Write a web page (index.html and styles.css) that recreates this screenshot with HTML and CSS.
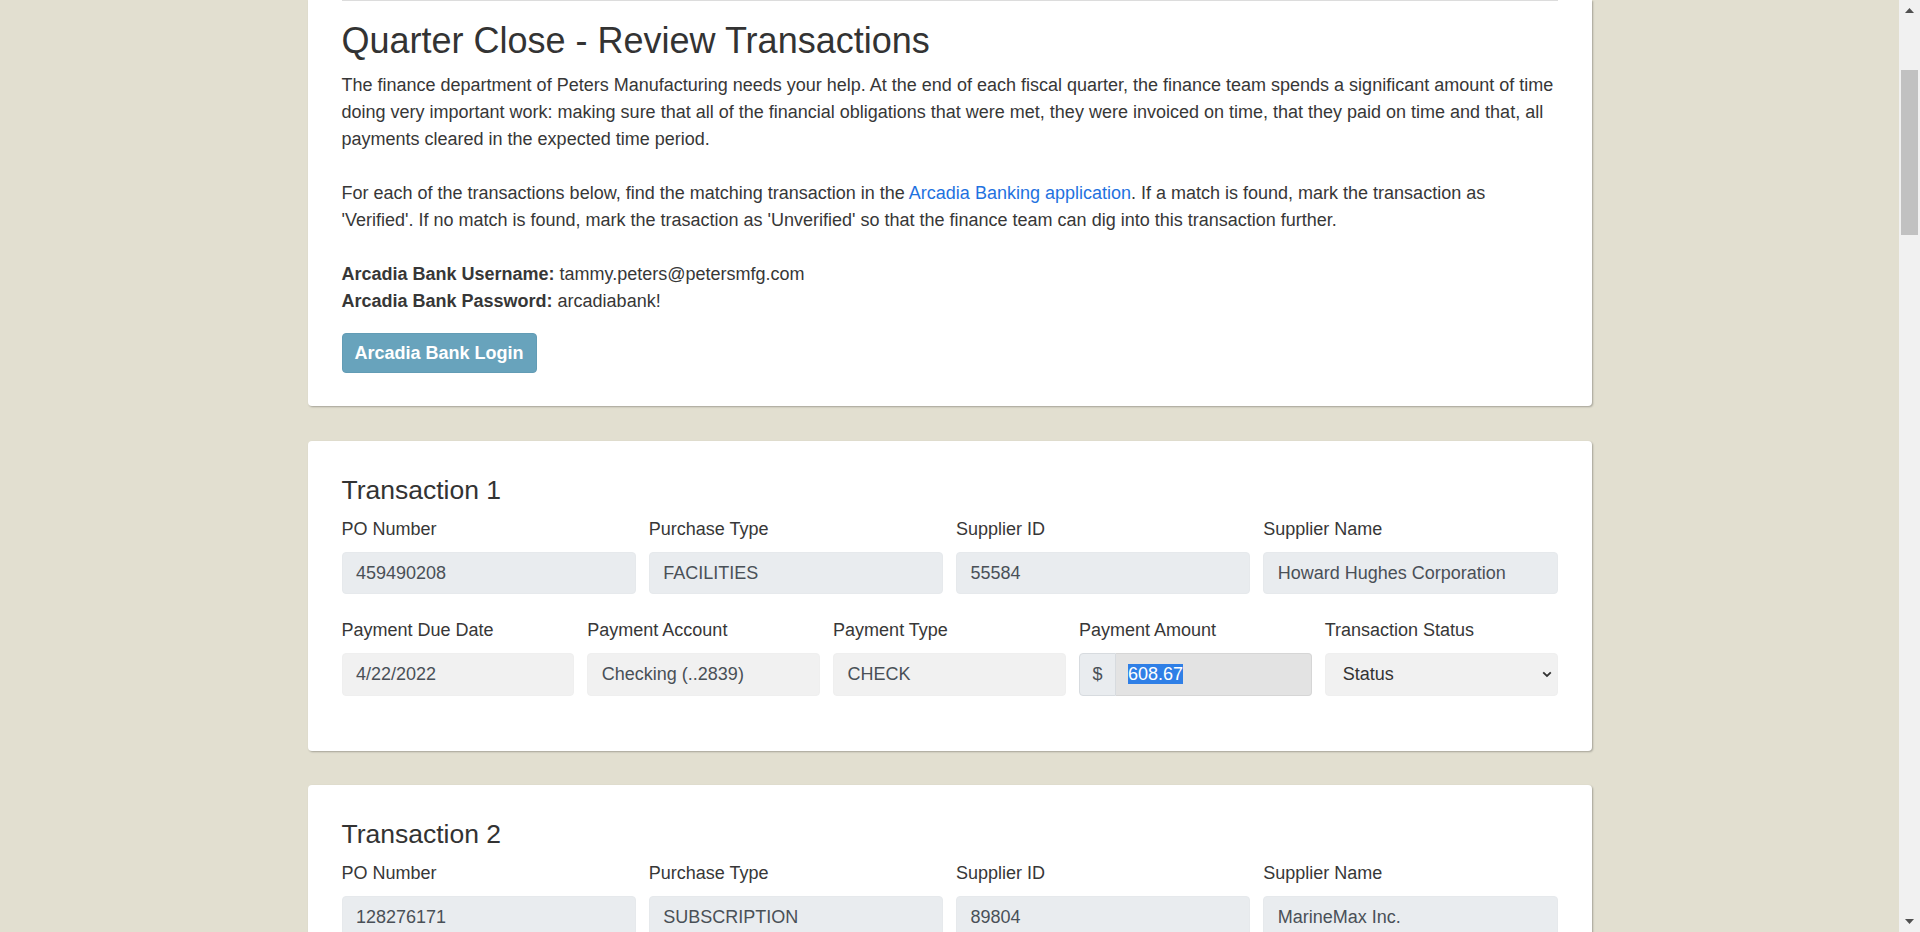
FILE: index.html
```html
<!DOCTYPE html>
<html lang="en">
<head>
<meta charset="utf-8">
<title>Quarter Close - Review Transactions</title>
<link rel="stylesheet" href="styles.css">
</head>
<body>
<div class="page">
  <div class="container">
    <section class="card card-intro">
      <hr class="rule">
      <h2 class="title">Quarter Close - Review Transactions</h2>
      <p class="intro">The finance department of Peters Manufacturing needs your help. At the end of each fiscal quarter, the finance team spends a significant amount of time doing very important work: making sure that all of the financial obligations that were met, they were invoiced on time, that they paid on time and that, all payments cleared in the expected time period.<br><br>For each of the transactions below, find the matching transaction in the <a class="link" href="#">Arcadia Banking application</a>. If a match is found, mark the transaction as 'Verified'. If no match is found, mark the trasaction as 'Unverified' so that the finance team can dig into this transaction further.<br><br><b>Arcadia Bank Username:</b> tammy.peters@petersmfg.com<br><b>Arcadia Bank Password:</b> arcadiabank!</p>
      <button class="btn-login" type="button">Arcadia Bank Login</button>
    </section>

    <section class="card">
      <h4 class="tx-title">Transaction 1</h4>
      <div class="row row-4">
        <div class="field"><label class="label">PO Number</label><div class="control">459490208</div></div>
        <div class="field"><label class="label">Purchase Type</label><div class="control">FACILITIES</div></div>
        <div class="field"><label class="label">Supplier ID</label><div class="control">55584</div></div>
        <div class="field"><label class="label">Supplier Name</label><div class="control">Howard Hughes Corporation</div></div>
      </div>
      <div class="row row-5">
        <div class="field"><label class="label">Payment Due Date</label><div class="control control-light">4/22/2022</div></div>
        <div class="field"><label class="label">Payment Account</label><div class="control control-light">Checking (..2839)</div></div>
        <div class="field"><label class="label">Payment Type</label><div class="control control-light">CHECK</div></div>
        <div class="field"><label class="label">Payment Amount</label>
          <div class="input-group"><span class="addon">$</span><div class="control control-amount"><span class="selected">608.67</span></div></div>
        </div>
        <div class="field"><label class="label">Transaction Status</label>
          <div class="control control-light select"><span>Status</span>
            <svg class="chevron" width="10" height="7" viewBox="0 0 10 7"><path d="M1.2 1.3 L5 5 L8.8 1.3" fill="none" stroke="#333" stroke-width="1.8"/></svg>
          </div>
        </div>
      </div>
    </section>

    <section class="card">
      <h4 class="tx-title">Transaction 2</h4>
      <div class="row row-4">
        <div class="field"><label class="label">PO Number</label><div class="control">128276171</div></div>
        <div class="field"><label class="label">Purchase Type</label><div class="control">SUBSCRIPTION</div></div>
        <div class="field"><label class="label">Supplier ID</label><div class="control">89804</div></div>
        <div class="field"><label class="label">Supplier Name</label><div class="control">MarineMax Inc.</div></div>
      </div>
    </section>
  </div>
</div>
<div class="scrollbar">
  <div class="sb-btn"><svg width="9" height="5" viewBox="0 0 9 5"><path d="M0 5 L4.5 0 L9 5 Z" fill="#505050"/></svg></div>
  <div class="sb-track">
    <div class="sb-thumb"></div>
  </div>
  <div class="sb-btn"><svg width="9" height="5" viewBox="0 0 9 5"><path d="M0 0 L4.5 5 L9 0 Z" fill="#505050"/></svg></div>
</div>
</body>
</html>
```

FILE: styles.css
```css
html, body {
  margin: 0;
  height: 100%;
}
body {
  display: flex;
  overflow: hidden;
  font-family: "Liberation Sans", Arial, sans-serif;
  font-size: 18px;
  line-height: 27px;
  color: #373737;
}
.page {
  flex: 1;
  overflow: hidden;
  background: #e2dfd0;
}
.container {
  width: 1284px;
  margin: 0 auto;
}
.card {
  background: #fff;
  border-radius: 4px;
  box-shadow: 1px 1px 2px rgba(0, 0, 0, 0.28);
  padding: 34px 34px 34px;
  margin-bottom: 34px;
}
.card-intro {
  padding-top: 0;
  padding-bottom: 33px;
  border-radius: 0 0 4px 4px;
  margin-bottom: 35px;
}
.rule {
  margin: 0 0 18px;
  border: 0;
  border-top: 1px solid #dcdcdc;
}
.title {
  margin: 0 0 10px;
  font-size: 36px;
  line-height: 1.2;
  font-weight: normal;
  color: #333;
}
.intro {
  margin: 0 0 18px;
}
.intro b {
  font-weight: bold;
}
.link {
  color: #1f72e0;
  text-decoration: none;
}
.btn-login {
  display: block;
  box-sizing: border-box;
  white-space: nowrap;
  font-family: inherit;
  font-size: 18px;
  font-weight: bold;
  line-height: 27px;
  color: #fff;
  background: #68a3bc;
  border: 1px solid #629cb5;
  border-radius: 4px;
  padding: 5.5px 12px;
  height: 40px;
}
.tx-title {
  margin: 0 0 9px;
  font-size: 26.5px;
  line-height: 1.2;
  font-weight: normal;
  color: #333;
}
.row {
  display: grid;
  column-gap: 13px;
}
.row-4 {
  grid-template-columns: repeat(4, 1fr);
  margin-bottom: 23px;
}
.row-5 {
  grid-template-columns: repeat(5, 1fr);
  margin-bottom: 21px;
}
.field {
  display: flex;
  flex-direction: column;
  min-width: 0;
}
.label {
  display: block;
  margin-bottom: 9px;
}
.control {
  height: 42.5px;
  box-sizing: border-box;
  padding: 6.75px 13.5px;
  background: #e9ecef;
  border: 1px solid #e6e9ec;
  border-radius: 4px;
  color: #495057;
  white-space: nowrap;
  overflow: hidden;
}
.control-light {
  background: #f1f1f1;
  border-color: #efefef;
}
.input-group {
  display: flex;
}
.addon {
  flex: 0 0 auto;
  width: 37px;
  box-sizing: border-box;
  height: 42.5px;
  padding: 6.75px 0;
  text-align: center;
  background: #e9ecef;
  border: 1px solid #d7dbdf;
  border-radius: 4px 0 0 4px;
  color: #495057;
}
.control-amount {
  flex: 1;
  min-width: 0;
  background: #e3e3e3;
  border: 1px solid #d6d6d6;
  border-left: 0;
  border-radius: 0 4px 4px 0;
  padding-left: 12px;
}
.selected {
  background: #2f7fe6;
  color: #fff;
}
.select {
  display: flex;
  align-items: center;
  justify-content: space-between;
  padding-left: 17px;
  padding-right: 5px;
  color: #333;
}
.chevron {
  display: block;
}
.scrollbar {
  flex: 0 0 21px;
  display: flex;
  flex-direction: column;
  background: #f1f1f1;
}
.sb-btn {
  flex: 0 0 21px;
  display: flex;
  align-items: center;
  justify-content: center;
}
.sb-track {
  flex: 1;
  padding-top: 49px;
}
.sb-thumb {
  height: 165px;
  margin: 0 2px 0 2px;
  background: #c1c1c1;
}
```
